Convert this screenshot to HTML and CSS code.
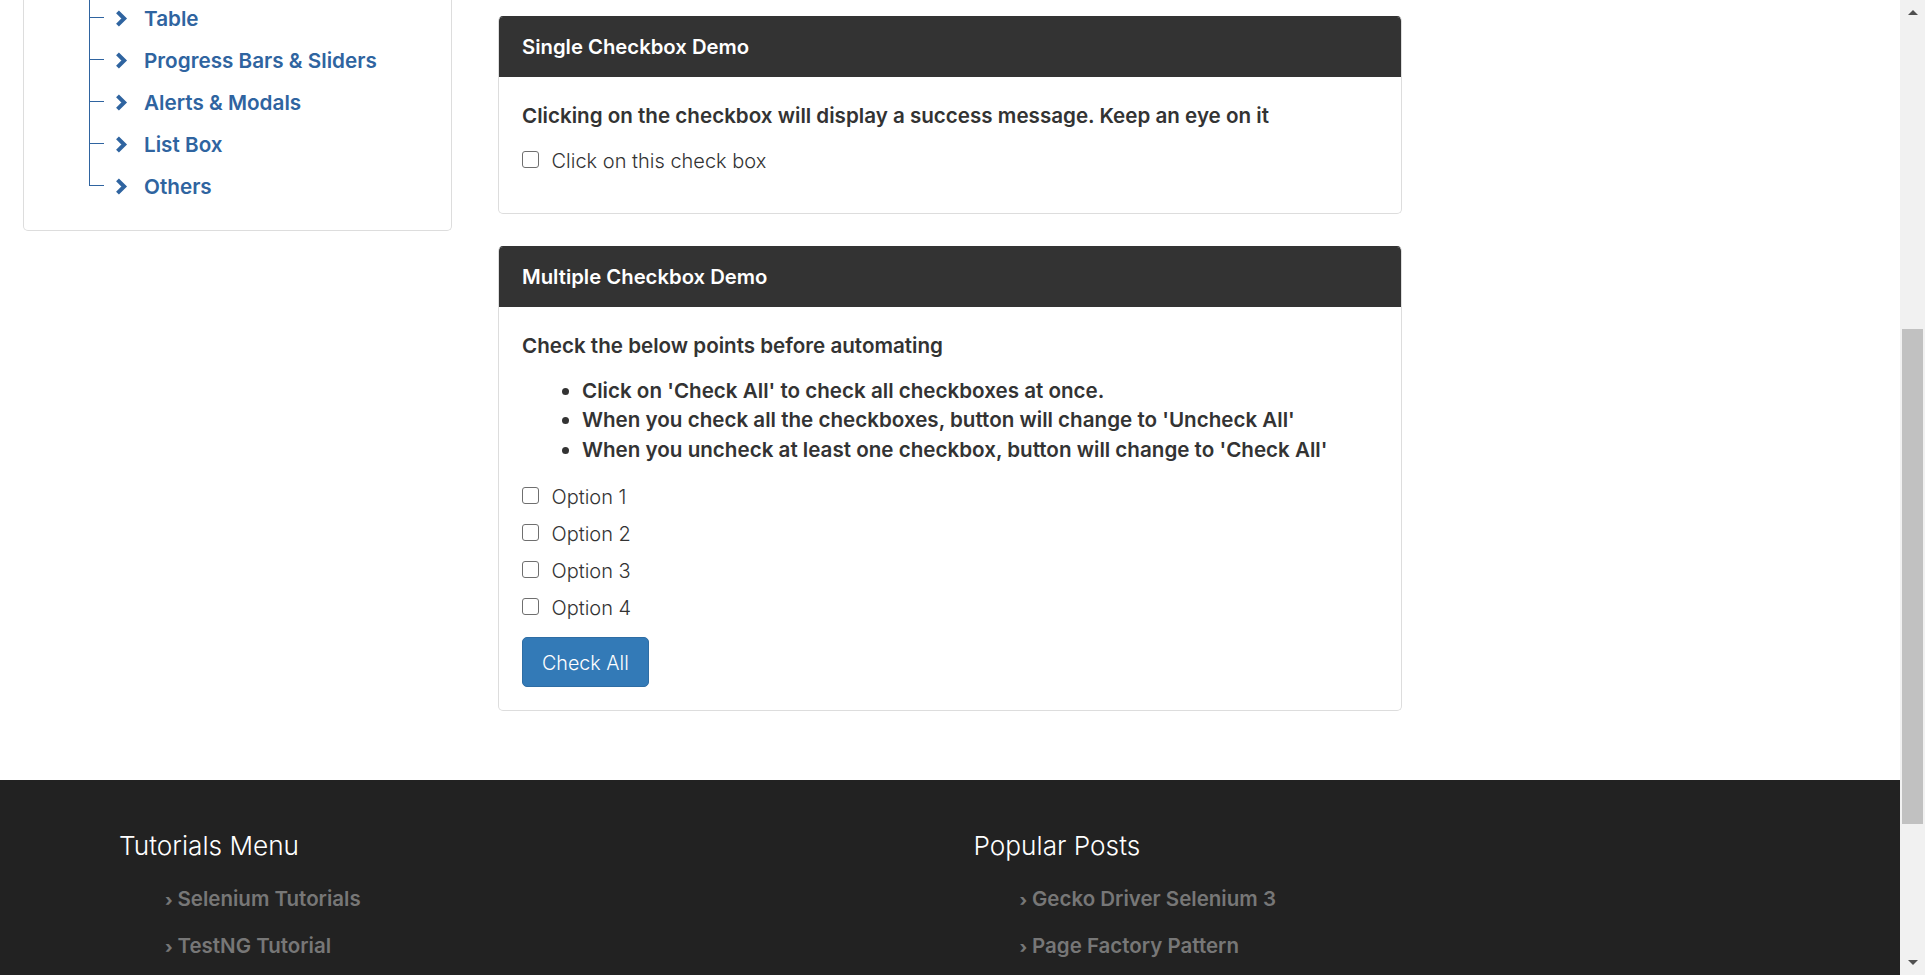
FILE: index.html
```html
<!DOCTYPE html>
<html lang="en">
<head>
<meta charset="utf-8">
<title>Checkbox Demo</title>
<link rel="stylesheet" href="styles.css">
</head>
<body>
<div class="screen">
  <div class="page">
    <div class="content">
      <aside class="sidebar">
        <div class="side-panel">
          <ul class="tree">
            <li><svg class="chev" viewBox="0 0 13 17" width="13" height="17"><polyline points="2.5,1.8 9.2,8.5 2.5,15.2"/></svg><a class="tree-link">Table</a></li>
            <li><svg class="chev" viewBox="0 0 13 17" width="13" height="17"><polyline points="2.5,1.8 9.2,8.5 2.5,15.2"/></svg><a class="tree-link">Progress Bars &amp; Sliders</a></li>
            <li><svg class="chev" viewBox="0 0 13 17" width="13" height="17"><polyline points="2.5,1.8 9.2,8.5 2.5,15.2"/></svg><a class="tree-link">Alerts &amp; Modals</a></li>
            <li><svg class="chev" viewBox="0 0 13 17" width="13" height="17"><polyline points="2.5,1.8 9.2,8.5 2.5,15.2"/></svg><a class="tree-link">List Box</a></li>
            <li class="last"><svg class="chev" viewBox="0 0 13 17" width="13" height="17"><polyline points="2.5,1.8 9.2,8.5 2.5,15.2"/></svg><a class="tree-link">Others</a></li>
          </ul>
        </div>
      </aside>
      <main class="main">
        <section class="panel panel-single">
          <div class="panel-heading">Single Checkbox Demo</div>
          <div class="panel-body">
            <p class="lead">Clicking on the checkbox will display a success message. Keep an eye on it</p>
            <label class="check"><input type="checkbox" class="cb"><span>Click on this check box</span></label>
          </div>
        </section>
        <section class="panel panel-multi">
          <div class="panel-heading">Multiple Checkbox Demo</div>
          <div class="panel-body">
            <p class="lead">Check the below points before automating</p>
            <ul class="points">
              <li>Click on 'Check All' to check all checkboxes at once.</li>
              <li>When you check all the checkboxes, button will change to 'Uncheck All'</li>
              <li>When you uncheck at least one checkbox, button will change to 'Check All'</li>
            </ul>
            <div class="options">
              <label class="check"><input type="checkbox" class="cb"><span>Option 1</span></label>
              <label class="check"><input type="checkbox" class="cb"><span>Option 2</span></label>
              <label class="check"><input type="checkbox" class="cb"><span>Option 3</span></label>
              <label class="check"><input type="checkbox" class="cb"><span>Option 4</span></label>
            </div>
            <button class="btn" type="button">Check All</button>
          </div>
        </section>
      </main>
    </div>
    <footer class="footer">
      <div class="footer-col">
        <h3 class="footer-title">Tutorials Menu</h3>
        <ul class="footer-list">
          <li><span class="arrow">›</span><a>Selenium Tutorials</a></li>
          <li><span class="arrow">›</span><a>TestNG Tutorial</a></li>
        </ul>
      </div>
      <div class="footer-col">
        <h3 class="footer-title">Popular Posts</h3>
        <ul class="footer-list">
          <li><span class="arrow">›</span><a>Gecko Driver Selenium 3</a></li>
          <li><span class="arrow">›</span><a>Page Factory Pattern</a></li>
        </ul>
      </div>
    </footer>
  </div>
  <div class="scrollbar">
    <div class="sb-btn"><span class="tri-up"></span></div>
    <div class="sb-thumb"></div>
    <div class="sb-space"></div>
    <div class="sb-btn"><span class="tri-down"></span></div>
  </div>
</div>
</body>
</html>
```
FILE: styles.css
```css
html, body {
  margin: 0;
  padding: 0;
  background: #fff;
}
body {
  font-family: Inter, "Noto Sans", sans-serif;
  color: #333;
}
.screen {
  display: flex;
  width: 1925px;
  height: 975px;
  overflow: hidden;
}
.page {
  width: 1900px;
  display: flex;
  flex-direction: column;
  overflow: hidden;
}
.content {
  height: 780px;
  flex: none;
  display: flex;
  align-items: flex-start;
  padding-left: 23px;
  gap: 46px;
}

/* Sidebar */
.sidebar {
  width: 429px;
  flex: none;
}
.side-panel {
  border: 1px solid #ddd;
  border-top: none;
  border-radius: 0 0 5px 5px;
  padding-bottom: 22px;
}
.tree {
  list-style: none;
  margin: -2.5px 0 0 65px;
  padding: 0;
}
.tree li {
  position: relative;
  height: 42px;
  display: flex;
  align-items: center;
  padding-left: 26px;
  font-weight: 600;
  font-size: 20.7px;
  color: #2f64a0;
}
.tree li::before {
  content: "";
  position: absolute;
  left: 0;
  top: 0;
  bottom: 0;
  border-left: 1px solid #2f64a0;
}
.tree li.last::before {
  bottom: auto;
  height: 20px;
}
.tree li::after {
  content: "";
  position: absolute;
  left: 0;
  top: 19px;
  width: 15px;
  border-top: 1px solid #2f64a0;
}
.chev {
  flex: none;
  margin-top: -1px;
}
.chev polyline {
  fill: none;
  stroke: #2f64a0;
  stroke-width: 4;
  stroke-linejoin: miter;
}
.tree-link {
  margin-left: 16px;
  line-height: 42px;
}

/* Main panels */
.main {
  width: 904px;
  flex: none;
  padding-top: 16px;
  display: flex;
  flex-direction: column;
  gap: 32px;
}
.panel {
  border: 1px solid #ddd;
  border-top-color: #333;
  border-radius: 5px;
  overflow: hidden;
  background: #fff;
}
.panel-heading {
  background: #333;
  color: #fff;
  height: 60px;
  line-height: 60px;
  padding: 0 23px;
  font-size: 20.3px;
  font-weight: 600;
}
.panel-body {
  padding: 24px 23px 23px;
}
.panel-single .panel-body {
  padding-bottom: 37px;
}
.lead {
  margin: 0;
  font-size: 20.6px;
  font-weight: 600;
  line-height: 30px;
}
.panel-single .lead {
  margin-bottom: 15px;
}
.check {
  display: flex;
  align-items: center;
  height: 30px;
  font-size: 20px;
  font-weight: 300;
  color: #333;
}
.cb {
  appearance: none;
  -webkit-appearance: none;
  box-sizing: border-box;
  width: 17px;
  height: 17px;
  margin: 0 12.5px 3px 0;
  border: 1.4px solid #6f6f6f;
  border-radius: 3px;
  background: #fff;
  flex: none;
}
.points {
  margin: 15px 0 0;
  padding-left: 60px;
  font-size: 20.6px;
  font-weight: 600;
  line-height: 29.4px;
}
.options {
  margin-top: 18px;
  display: flex;
  flex-direction: column;
  gap: 7px;
}
.btn {
  margin-top: 14px;
  display: block;
  box-sizing: border-box;
  height: 50px;
  padding: 1px 19px 0;
  background: #337ab7;
  border: 1px solid #2e6da4;
  border-radius: 5px;
  color: #fff;
  font-family: Inter, "Noto Sans", sans-serif;
  font-size: 19.7px;
  font-weight: 300;
  line-height: 30px;
}

/* Footer */
.footer {
  flex: 1;
  background: #222;
  display: flex;
  padding: 48px 0 0 119px;
}
.footer-col {
  width: 854.5px;
  flex: none;
}
.footer-title {
  margin: 0 0 12px;
  font-size: 26.2px;
  font-weight: 300;
  line-height: 36px;
  color: #fff;
}
.footer-list {
  list-style: none;
  margin: 0;
  padding: 0 0 0 46px;
}
.footer-list li {
  line-height: 45px;
  font-size: 20.5px;
  font-weight: 600;
  color: #777;
}
.arrow {
  display: inline-block;
  width: 12.5px;
  font-size: 17px;
  font-weight: 800;
}

/* Scrollbar */
.scrollbar {
  width: 25px;
  flex: none;
  background: #f1f1f1;
  display: flex;
  flex-direction: column;
}
.sb-btn {
  height: 25px;
  display: flex;
  align-items: center;
  justify-content: center;
  flex: none;
}
.tri-up {
  width: 0;
  height: 0;
  border-left: 5px solid transparent;
  border-right: 5px solid transparent;
  border-bottom: 5px solid #505050;
}
.tri-down {
  width: 0;
  height: 0;
  border-left: 5px solid transparent;
  border-right: 5px solid transparent;
  border-top: 5px solid #505050;
}
.sb-thumb {
  margin: 304px 2px 0;
  height: 495px;
  background: #c1c1c1;
  flex: none;
}
.sb-space {
  flex: 1;
}
```
